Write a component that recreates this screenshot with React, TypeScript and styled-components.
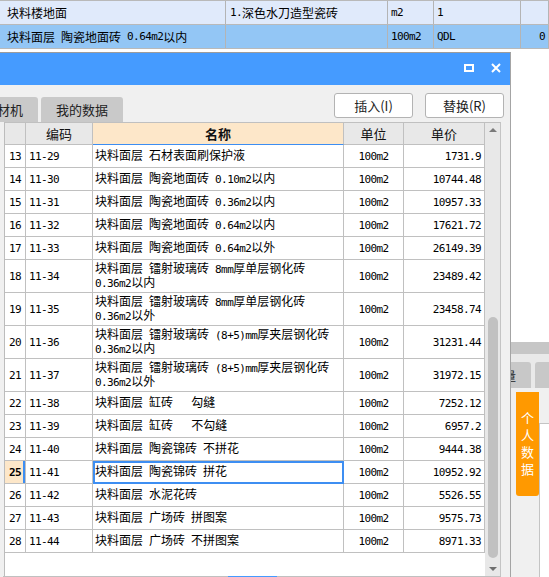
import React from 'react';
import styled, { createGlobalStyle } from 'styled-components';

const GlobalStyle = createGlobalStyle`
  html, body {
    margin: 0;
    padding: 0;
  }
  body {
    font-family: "Noto Sans CJK SC", "Noto Sans", sans-serif;
    font-size: 12px;
    color: #000;
    background: #fff;
    overflow: hidden;
  }
`;

type Item = { no: number; code: string; name: string[]; unit: string; price: string };

const items: Item[] = [
  { no: 13, code: '11-29', name: ['块料面层 石材表面刷保护液'], unit: '100m2', price: '1731.9' },
  { no: 14, code: '11-30', name: ['块料面层 陶瓷地面砖 0.10m2以内'], unit: '100m2', price: '10744.48' },
  { no: 15, code: '11-31', name: ['块料面层 陶瓷地面砖 0.36m2以内'], unit: '100m2', price: '10957.33' },
  { no: 16, code: '11-32', name: ['块料面层 陶瓷地面砖 0.64m2以内'], unit: '100m2', price: '17621.72' },
  { no: 17, code: '11-33', name: ['块料面层 陶瓷地面砖 0.64m2以外'], unit: '100m2', price: '26149.39' },
  { no: 18, code: '11-34', name: ['块料面层 镭射玻璃砖 8mm厚单层钢化砖', '0.36m2以内'], unit: '100m2', price: '23489.42' },
  { no: 19, code: '11-35', name: ['块料面层 镭射玻璃砖 8mm厚单层钢化砖', '0.36m2以外'], unit: '100m2', price: '23458.74' },
  { no: 20, code: '11-36', name: ['块料面层 镭射玻璃砖 (8+5)mm厚夹层钢化砖', '0.36m2以内'], unit: '100m2', price: '31231.44' },
  { no: 21, code: '11-37', name: ['块料面层 镭射玻璃砖 (8+5)mm厚夹层钢化砖', '0.36m2以外'], unit: '100m2', price: '31972.15' },
  { no: 22, code: '11-38', name: ['块料面层 缸砖   勾缝'], unit: '100m2', price: '7252.12' },
  { no: 23, code: '11-39', name: ['块料面层 缸砖   不勾缝'], unit: '100m2', price: '6957.2' },
  { no: 24, code: '11-40', name: ['块料面层 陶瓷锦砖 不拼花'], unit: '100m2', price: '9444.38' },
  { no: 25, code: '11-41', name: ['块料面层 陶瓷锦砖 拼花'], unit: '100m2', price: '10952.92' },
  { no: 26, code: '11-42', name: ['块料面层 水泥花砖'], unit: '100m2', price: '5526.55' },
  { no: 27, code: '11-43', name: ['块料面层 广场砖 拼图案'], unit: '100m2', price: '9575.73' },
  { no: 28, code: '11-44', name: ['块料面层 广场砖 不拼图案'], unit: '100m2', price: '8971.33' },
];

const SELECTED = 25;

/* half-width runs render in a narrow mono face, like the old song-ti cells */
const Latin = styled.span<{ $bold?: boolean }>`
  font-family: "DejaVu Sans Mono", "Liberation Mono", monospace;
  font-size: 11px;
  letter-spacing: -0.6px;
  font-weight: ${(p) => (p.$bold ? 700 : 400)};
  white-space: pre;
`;

const Txt = ({ text, bold }: { text: string; bold?: boolean }) => (
  <>
    {text
      .split(/([\x20-\x7e]+)/)
      .filter(Boolean)
      .map((part, i) =>
        /^[\x20-\x7e]+$/.test(part) ? (
          <Latin key={i} $bold={bold}>
            {part}
          </Latin>
        ) : (
          <React.Fragment key={i}>{part}</React.Fragment>
        )
      )}
  </>
);

const Desktop = styled.div`
  position: relative;
  width: 549px;
  height: 577px;
  overflow: hidden;
  display: flex;
  flex-direction: column;
  background: #fff;
`;

/* ---------- spreadsheet behind the dialog ---------- */

const Sheet = styled.div`
  border-top: 1px solid #b9b9b9;
`;

const SheetRow = styled.div<{ $active?: boolean }>`
  display: grid;
  grid-template-columns: 226px 162px 46px 87px 1fr;
  height: 23px;
  background: ${(p) => (p.$active ? '#93c6f5' : '#e0eafb')};
  border-bottom: 1px solid #b9b9b9;
`;

const SheetCell = styled.div<{ $right?: boolean; $pad?: number }>`
  display: flex;
  align-items: center;
  justify-content: ${(p) => (p.$right ? 'flex-end' : 'flex-start')};
  padding: ${(p) => (p.$right ? '0 3px 0 0' : `0 0 0 ${p.$pad ?? 4}px`)};
  border-right: 1px solid #b4b4b4;
  white-space: nowrap;
  overflow: hidden;
  font-size: 12px;
`;

const Spacer = styled.div`
  flex: 1;
`;

const Lower = styled.div`
  height: 235px;
  display: flex;
  flex-direction: column;
  background: #f0f0f0;
`;

const Band = styled.div`
  height: 12px;
  background: #c6c6c6;
`;

const TabRow = styled.div`
  height: 34px;
  box-sizing: border-box;
  padding-top: 8px;
  display: flex;
  justify-content: flex-end;
  gap: 4px;
  margin-right: -40px;
  background: #e9e9e9;
`;

const BackTab = styled.div<{ $w?: number }>`
  display: flex;
  align-items: center;
  padding: 0 15px;
  min-width: ${(p) => p.$w ?? 0}px;
  background: #c8c8c8;
  border-radius: 3px 3px 0 0;
  font-size: 12px;
  color: #222;
`;

const LowerBody = styled.div`
  flex: 1;
  display: flex;
  justify-content: flex-end;
  padding-top: 4px;
`;

const SideTab = styled.div`
  width: 23px;
  height: 104px;
  box-sizing: border-box;
  padding-top: 20px;
  background: #ff9900;
  border-radius: 0 0 3px 3px;
  display: flex;
  justify-content: center;
`;

const SideLabel = styled.span`
  writing-mode: vertical-rl;
  text-orientation: upright;
  letter-spacing: 4px;
  color: #fff;
  font-size: 13px;
  line-height: 13px;
`;

const SidePane = styled.div`
  width: 9px;
  margin-top: 31px;
  background: #fff;
  border-left: 1px solid #c4c4c4;
  border-top: 1px solid #c4c4c4;
`;

/* ---------- floating dialog ---------- */

const Dialog = styled.section`
  position: absolute;
  left: 0;
  top: 52px;
  width: 511px;
  height: 532px;
  box-sizing: border-box;
  display: flex;
  flex-direction: column;
  background: #f0f0f0;
  border-top: 1px solid #9c9c9c;
  border-right: 1px solid #a4a4a4;
  overflow: hidden;
`;

const TitleBar = styled.header`
  height: 32px;
  flex: none;
  display: flex;
  align-items: center;
  justify-content: flex-end;
  gap: 17px;
  padding: 0 9px 3px 0;
  box-sizing: border-box;
  background: #459bff;
`;

const IconButton = styled.span`
  display: flex;
  width: 10px;
  height: 10px;
  align-items: center;
  justify-content: center;
`;

const Toolbar = styled.div`
  height: 37px;
  flex: none;
  display: flex;
  align-items: flex-end;
`;

const Tabs = styled.div`
  display: flex;
  gap: 3px;
  margin-left: -31px;
`;

const Tab = styled.div`
  height: 25px;
  padding: 0 15px;
  display: flex;
  align-items: center;
  background: #c9c9c9;
  border-radius: 3px 3px 0 0;
  font-size: 13px;
  color: #222;
`;

const Actions = styled.div`
  margin-left: auto;
  align-self: flex-start;
  padding: 8px 6px 0 0;
  display: flex;
  gap: 12px;
`;

const Button = styled.button`
  width: 79px;
  height: 25px;
  padding: 0;
  background: #fff;
  border: 1px solid #b3b3b3;
  border-radius: 3px;
  font-family: "Noto Sans CJK SC", "Noto Sans", sans-serif;
  font-size: 13px;
  color: #222;
`;

const Panel = styled.div`
  flex: 1;
  display: flex;
  margin: 0 9px 0 4px;
  border-top: 1px solid #c0c0c0;
  border-left: 1px solid #bcbcbc;
  border-right: 1px solid #c4c4c4;
  min-height: 0;
`;

const Grid = styled.div`
  flex: 1;
  background: #fff;
  overflow: hidden;
`;

const COLS = '21px 67px 251px 60px 81px';

const HeadRow = styled.div`
  display: grid;
  grid-template-columns: ${COLS};
  height: 22px;
`;

const HeadCell = styled.div<{ $accent?: boolean }>`
  display: flex;
  align-items: center;
  justify-content: center;
  box-sizing: border-box;
  background: ${(p) => (p.$accent ? '#fde7c9' : '#e8e8e8')};
  border-right: 1px solid #c0c0c0;
  border-bottom: 1px solid ${(p) => (p.$accent ? '#3d8ef2' : '#c0c0c0')};
  font-size: 13px;
  font-weight: ${(p) => (p.$accent ? 700 : 400)};
  color: #111;
`;

const Row = styled.div<{ $tall?: boolean }>`
  display: grid;
  grid-template-columns: ${COLS};
  height: ${(p) => (p.$tall ? 33 : 23)}px;
`;

const Cell = styled.div`
  display: flex;
  align-items: center;
  box-sizing: border-box;
  border-right: 1px solid #c0c0c0;
  border-bottom: 1px solid #c0c0c0;
  white-space: nowrap;
  overflow: hidden;
  font-size: 12px;
`;

const NumCell = styled(Cell)<{ $active?: boolean }>`
  justify-content: center;
  background: ${(p) => (p.$active ? '#fde7c9' : '#fff')};
  box-shadow: ${(p) => (p.$active ? 'inset -2px 0 0 #3d8ef2' : 'none')};
`;

const CodeCell = styled(Cell)`
  padding-left: 3px;
`;

const NameCell = styled(Cell)<{ $active?: boolean }>`
  flex-direction: column;
  align-items: flex-start;
  justify-content: center;
  padding-left: 2px;
  line-height: 12px;
  ${(p) =>
    p.$active &&
    `
    border-right-color: #3d8ef2;
    border-bottom-color: #3d8ef2;
    box-shadow: inset 2px 2px 0 #3d8ef2, inset -1px -1px 0 #3d8ef2;
  `}
`;

const Line = styled.div`
  white-space: pre;
`;

const UnitCell = styled(Cell)`
  justify-content: center;
`;

const PriceCell = styled(Cell)`
  justify-content: flex-end;
  padding-right: 3px;
`;

const Scrollbar = styled.div`
  width: 15px;
  flex: none;
  display: flex;
  flex-direction: column;
  align-items: center;
  background: #e8e8e8;
`;

const Arrow = styled.div<{ $down?: boolean }>`
  height: 14px;
  flex: none;
  display: flex;
  align-items: center;
  justify-content: center;
  &::before {
    content: '';
    border-left: 4px solid transparent;
    border-right: 4px solid transparent;
    ${(p) => (p.$down ? 'border-top: 4px solid #6e6e6e;' : 'border-bottom: 4px solid #7a7a7a;')}
  }
`;

const Track = styled.div`
  flex: 1;
  display: flex;
  flex-direction: column;
  align-items: center;
`;

const Thumb = styled.div`
  width: 10px;
  border-radius: 5px;
  background: #c1c1c1;
`;

const Splitter = styled.div`
  height: 8px;
  flex: none;
  margin: 0 9px 0 3px;
  display: flex;
  justify-content: center;
  background: #c0c0c0;
`;

const Handle = styled.div`
  width: 49px;
  display: flex;
  justify-content: center;
  background: #459bff;
  &::before {
    content: '';
    margin-top: 1px;
    border-left: 4px solid transparent;
    border-right: 4px solid transparent;
    border-bottom: 4px solid #fff;
    height: 0;
  }
`;

const App: React.FC = () => {
  return (
    <Desktop>
      <GlobalStyle />
      <Sheet>
        <SheetRow>
          <SheetCell $pad={7}>块料楼地面</SheetCell>
          <SheetCell>
            <Txt text="1.深色水刀造型瓷砖" />
          </SheetCell>
          <SheetCell $pad={3}>
            <Txt text="m2" />
          </SheetCell>
          <SheetCell $pad={3}>
            <Txt text="1" />
          </SheetCell>
          <SheetCell />
        </SheetRow>
        <SheetRow $active>
          <SheetCell $pad={7}>
            <Txt text="块料面层 陶瓷地面砖 0.64m2以内" />
          </SheetCell>
          <SheetCell />
          <SheetCell $pad={3}>
            <Txt text="100m2" />
          </SheetCell>
          <SheetCell $pad={3}>
            <Txt text="QDL" />
          </SheetCell>
          <SheetCell $right>
            <Txt text="0" />
          </SheetCell>
        </SheetRow>
      </Sheet>
      <Spacer />
      <Lower>
        <Band />
        <TabRow>
          <BackTab>工程量</BackTab>
          <BackTab $w={24} />
        </TabRow>
        <LowerBody>
          <SideTab>
            <SideLabel>个人数据</SideLabel>
          </SideTab>
          <SidePane />
        </LowerBody>
      </Lower>

      <Dialog>
        <TitleBar>
          <IconButton>
            <svg width="10" height="8" viewBox="0 0 10 8">
              <rect x="1" y="1" width="8" height="6" fill="none" stroke="#fff" strokeWidth="2" />
            </svg>
          </IconButton>
          <IconButton>
            <svg width="10" height="10" viewBox="0 0 10 10">
              <path d="M1 1L9 9M9 1L1 9" stroke="#fff" strokeWidth="2" />
            </svg>
          </IconButton>
        </TitleBar>
        <Toolbar>
          <Tabs>
            <Tab>人材机</Tab>
            <Tab>我的数据</Tab>
          </Tabs>
          <Actions>
            <Button>插入(I)</Button>
            <Button>替换(R)</Button>
          </Actions>
        </Toolbar>
        <Panel>
          <Grid>
            <HeadRow>
              <HeadCell />
              <HeadCell>编码</HeadCell>
              <HeadCell $accent>名称</HeadCell>
              <HeadCell>单位</HeadCell>
              <HeadCell>单价</HeadCell>
            </HeadRow>
            {items.map((it) => {
              const active = it.no === SELECTED;
              return (
                <Row key={it.no} $tall={it.name.length > 1}>
                  <NumCell $active={active}>
                    <Txt text={String(it.no)} bold={active} />
                  </NumCell>
                  <CodeCell>
                    <Txt text={it.code} />
                  </CodeCell>
                  <NameCell $active={active}>
                    {it.name.map((line) => (
                      <Line key={line}>
                        <Txt text={line} />
                      </Line>
                    ))}
                  </NameCell>
                  <UnitCell>
                    <Txt text={it.unit} />
                  </UnitCell>
                  <PriceCell>
                    <Txt text={it.price} />
                  </PriceCell>
                </Row>
              );
            })}
          </Grid>
          <Scrollbar>
            <Arrow />
            <Track>
              <Thumb style={{ marginTop: 180, height: 241 }} />
            </Track>
            <Arrow $down />
          </Scrollbar>
        </Panel>
        <Splitter>
          <Handle />
        </Splitter>
      </Dialog>
    </Desktop>
  );
};

export default App;
